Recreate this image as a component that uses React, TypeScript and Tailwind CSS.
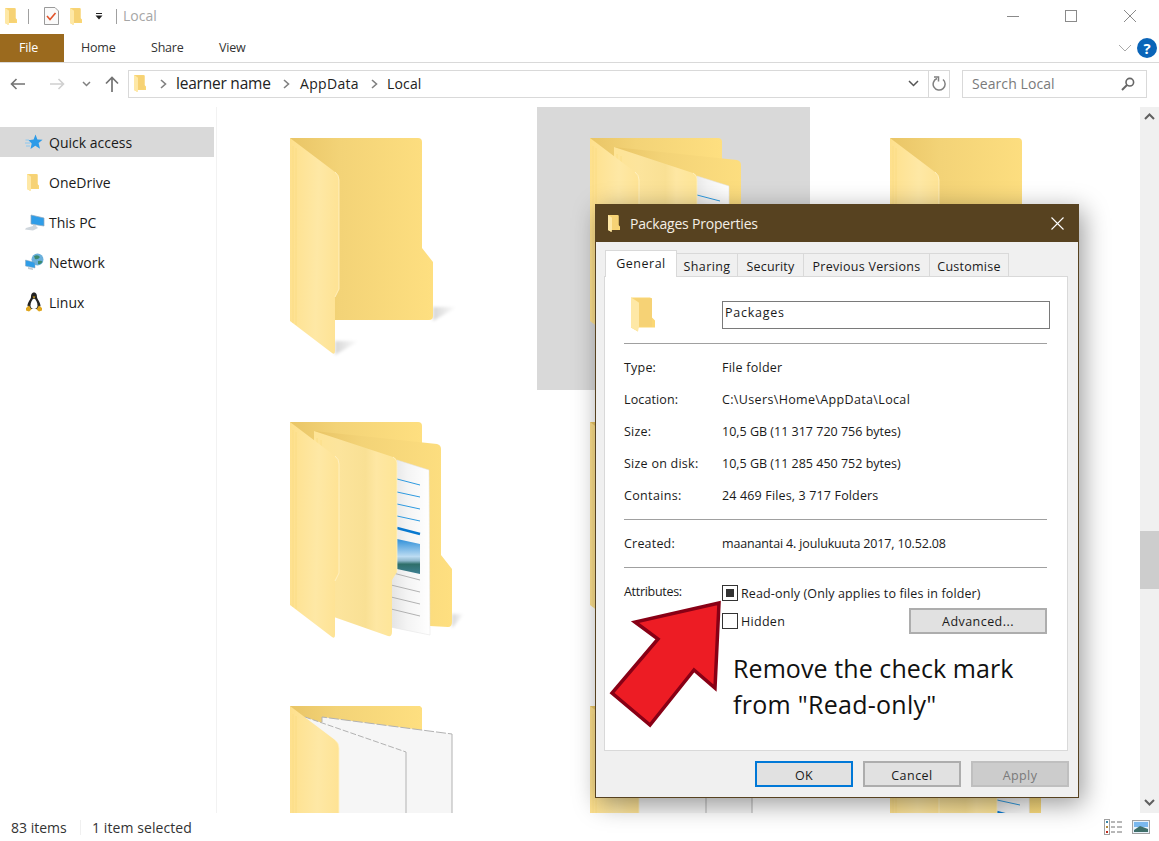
import React from "react";

const sans = "font-['Open_Sans','Noto_Sans',sans-serif]";

function Defs() {
  return (
    <svg className="absolute w-0 h-0" aria-hidden="true">
      <defs>
        <linearGradient id="back" x1="0" y1="0" x2="1" y2="0">
          <stop offset="0" stopColor="#e9c566" />
          <stop offset="0.35" stopColor="#f3d377" />
          <stop offset="1" stopColor="#fedf80" />
        </linearGradient>
        <linearGradient id="flap" x1="0" y1="0" x2="1" y2="0.1">
          <stop offset="0" stopColor="#fee08c" />
          <stop offset="0.6" stopColor="#fee8a5" />
          <stop offset="1" stopColor="#fee395" />
        </linearGradient>
        <linearGradient id="flap2" x1="0" y1="0" x2="1" y2="0">
          <stop offset="0" stopColor="#fee496" />
          <stop offset="0.3" stopColor="#fce49c" />
          <stop offset="0.62" stopColor="#f9e094" />
          <stop offset="0.75" stopColor="#fee7a3" />
          <stop offset="1" stopColor="#fee596" />
        </linearGradient>
        <linearGradient id="paper" x1="0" y1="0" x2="1" y2="0">
          <stop offset="0" stopColor="#dedede" />
          <stop offset="0.5" stopColor="#f4f4f4" />
          <stop offset="1" stopColor="#ffffff" />
        </linearGradient>
        <linearGradient id="shadowR" x1="0" y1="0" x2="1" y2="0">
          <stop offset="0" stopColor="#000" stopOpacity="0.16" />
          <stop offset="1" stopColor="#000" stopOpacity="0" />
        </linearGradient>
        <linearGradient id="sky" x1="0" y1="0" x2="0" y2="1">
          <stop offset="0" stopColor="#2f8fd8" />
          <stop offset="0.5" stopColor="#bcdcf2" />
          <stop offset="0.62" stopColor="#8fb8cc" />
          <stop offset="0.72" stopColor="#2f6f6a" />
          <stop offset="1" stopColor="#3d7f92" />
        </linearGradient>
      </defs>
    </svg>
  );
}

function Flap() {
  return (
    <g>
      <path d="M0 0L45 34Q49 37 49 42V151L45 159V213Q45 217 42 215L0 183Z" fill="url(#flap)" />
      <path d="M45 34Q49 37 49 42V151L45 159" fill="none" stroke="#fff3c9" strokeWidth="0.8" />
      <path d="M3 8V185M6 10V187" stroke="#fbdc84" strokeWidth="0.8" fill="none" />
    </g>
  );
}

function Shadow({ x, y, w = 24 }: { x: number; y: number; w?: number }) {
  return <path className="blur-[1.5px]" d={`M${x} ${y}H${x + 3}L${x + w} ${y}L${x} ${y + 14}Z`} fill="url(#shadowR)" />;
}

function PlainFolder() {
  return (
    <svg width="170" height="230" viewBox="0 0 170 230" className="block overflow-visible">
      <Shadow x={143} y={169} />
      <Shadow x={45} y={203} />
      <path d="M0 0H128Q132 0 132 4V110L143 124V178Q143 182 139 182H30Z" fill="url(#back)" />
      <Flap />
    </svg>
  );
}

function DocsFolder() {
  return (
    <svg width="170" height="230" viewBox="0 0 170 230" className="block overflow-visible">
      <Shadow x={162} y={192} w={12} />
      <path d="M0 0H128Q132 0 132 4V30H0Z" fill="url(#back)" />
      <path d="M24 9L147 22Q151 23 151 27V133L162 147V200Q162 205 158 205L140 204L60 150Z" fill="url(#back)" />
      <path d="M107 38L139 48L140 213L95 204Z" fill="url(#paper)" stroke="#e2e2e2" strokeWidth="0.5" />
      <g stroke="#2e9ae0" strokeWidth="1" fill="none">
        <path d="M107 57L130 63M107 70L130 75M107 82L130 87M107 94L130 99" />
      </g>
      <path d="M107 106L130 112" stroke="#0878cf" strokeWidth="2.4" />
      <path d="M107 117L130 122V152L107 147Z" fill="url(#sky)" />
      <g stroke="#a9a9a9" strokeWidth="0.9" fill="none">
        <path d="M103 151L130 158M101 163L130 170M101 175L130 182M101 187L130 194" />
      </g>
      <path d="M24 9L103 35Q107 37 107 41V150L102 158V210Q102 215 98 214L24 188Z" fill="url(#flap2)" />
      <path d="M103 35Q107 37 107 41V150" fill="none" stroke="#fff3c9" strokeWidth="0.8" />
      <path d="M27 16V40M31 18V40" stroke="#fbdc84" strokeWidth="0.8" />
      <Flap />
    </svg>
  );
}

function BlankFolder() {
  return (
    <svg width="170" height="230" viewBox="0 0 170 230" className="block overflow-visible">
      <path d="M0 0H130L132 2V40H0Z" fill="url(#back)" />
      <path d="M32 11L162 28V230H32Z" fill="#f6f6f6" />
      <path d="M32 16V11L162 28" fill="none" stroke="#b2b2b2" strokeWidth="1" strokeDasharray="10 2" />
      <path d="M162 28V230" fill="none" stroke="#b2b2b2" strokeWidth="1" />
      <path d="M15 11L116 46V230H15Z" fill="#f6f6f6" />
      <path d="M15 11L116 46" fill="none" stroke="#b2b2b2" strokeWidth="1" strokeDasharray="6 2" />
      <path d="M116 46V230" fill="none" stroke="#b2b2b2" strokeWidth="1" />
      <Flap />
    </svg>
  );
}

function MiniFolder({ w = 12, h = 17 }: { w?: number; h?: number }) {
  return (
    <svg width={w} height={h} viewBox="0 0 24 34" className="block shrink-0">
      <path d="M0 0H19L21 1V20L24 23V30H7V34L0 30Z" fill="#fbd774" />
      <path d="M0 0L8 5V29L7 34L0 30Z" fill="#fee8a6" />
      <path d="M8 5V29H21V1H3Z" fill="#f6d275" />
    </svg>
  );
}

function Chevron({ color = "#808080" }: { color?: string }) {
  return (
    <svg width="7" height="10" viewBox="0 0 7 10" className="block shrink-0">
      <path d="M1 1L5.5 5L1 9" fill="none" stroke={color} strokeWidth="1.6" />
    </svg>
  );
}

function StarIcon() {
  return (
    <svg width="18" height="17" viewBox="0 0 18 17" className="block">
      <path d="M10.5 0.5L12.4 5.4L17.6 5.7L13.6 9L15 14.8L10.3 11.8L5.5 15L6.7 9.4L3.5 6.2L8.6 5.6Z" fill="#2d9be8" />
      <path d="M0.5 6H4M0 9H5M1 12H5" stroke="#8cc8f0" strokeWidth="1" />
    </svg>
  );
}

function PcIcon() {
  return (
    <svg width="20" height="17" viewBox="0 0 20 17" className="block">
      <path d="M6 1L19 4V12L6 10Z" fill="#2f9de8" stroke="#8fa8bc" strokeWidth="0.7" />
      <path d="M8 10.5V12L1 14L0 15.5L8 16.5L13 14L11 12V11Z" fill="#cfd6dc" />
    </svg>
  );
}

function NetIcon() {
  return (
    <svg width="20" height="18" viewBox="0 0 20 18" className="block">
      <circle cx="12.5" cy="6.5" r="6" fill="#6ab0dc" />
      <path d="M9 3Q13 1 15 4Q13 7 10 6ZM13 8Q17 7 17.5 9Q15 12 13 11Z" fill="#3d8a6f" />
      <path d="M0.5 7L10 9.5V15L0.5 13Z" fill="#2f9de8" stroke="#93a9ba" strokeWidth="0.5" />
      <path d="M3 14L8 15.5V17L3 16Z" fill="#c5ccd2" />
    </svg>
  );
}

function TuxIcon() {
  return (
    <svg width="18" height="20" viewBox="0 0 18 20" className="block">
      <path d="M9 0.5C6.5 0.5 6 3 6 5C6 7 2.5 10 2.5 14L5 17H13L15.5 14C15.5 10 12 7 12 5C12 3 11.5 0.5 9 0.5Z" fill="#222" />
      <path d="M9 6.5C7 7.5 5.5 10.5 5.5 13.5C5.5 16 7 17 9 17C11 17 12.5 16 12.5 13.5C12.5 10.5 11 7.5 9 6.5Z" fill="#fff" />
      <path d="M7.5 4.5H10.5L9 6.5Z" fill="#e0a91f" />
      <path d="M1 16L4 13.5L6.5 17.5L4 19.5L1 18.5ZM17 16L14 13.5L11.5 17.5L14 19.5L17 18.5Z" fill="#dfa61e" />
    </svg>
  );
}

function NavItem({ icon, label, active }: { icon: React.ReactNode; label: string; active?: boolean }) {
  return (
    <div className={`h-[30px] w-[214px] flex items-center ${active ? "bg-[#d9d9d9]" : ""}`}>
      <div className="w-[49px] pl-[25px] flex items-center shrink-0">{icon}</div>
      <span className="text-[14px] text-[#1a1a1a]">{label}</span>
    </div>
  );
}

function Row({ label, value, labelT, valueT }: { label: string; value: string; labelT: string; valueT: string }) {
  return (
    <div className="flex h-[32px] pt-[2px] items-center text-[12.5px] text-[#1a1a1a]">
      <span className={`w-[98px] ${labelT}`}>{label}</span>
      <span className={valueT}>{value}</span>
    </div>
  );
}

function Sep({ className = "" }: { className?: string }) {
  return <div className={`h-px bg-[#a0a0a0] w-[423px] ${className}`} />;
}

function Tab({ label, w }: { label: string; w: string }) {
  return (
    <div className={`${w} h-[23px] pt-[4px] bg-[#f0f0f0] border border-[#d9d9d9] border-b-0 -ml-px flex items-center justify-center text-[12.5px] text-[#1a1a1a]`}>
      {label}
    </div>
  );
}

function Btn({ label, cls }: { label: string; cls: string }) {
  return (
    <div className={`w-[98px] h-[26px] pt-[4px] flex items-center justify-center text-[12.5px] border-2 ${cls}`}>{label}</div>
  );
}

function Dialog() {
  return (
    <div className="absolute left-[595px] top-[204px] w-[484px] h-[594px] bg-[#f0f0f0] border border-[#574220] border-t-0 shadow-[4px_6px_24px_rgba(0,0,0,0.4)] flex flex-col">
      <div className="h-[38px] -mx-px bg-[#574220] flex items-center pl-[13px] pr-[15px] shrink-0">
        <MiniFolder w={12} h={17} />
        <span className="ml-[10px] text-[14px] text-[#f4efe6] tracking-[-0.2px]">Packages Properties</span>
        <svg width="13" height="13" viewBox="0 0 13 13" className="block ml-auto">
          <path d="M0.5 0.5L12.5 12.5M12.5 0.5L0.5 12.5" stroke="#fff" strokeWidth="1.1" />
        </svg>
      </div>
      <div className="flex items-end h-[34px] pl-[9px] shrink-0">
        <div className="relative z-10 w-[72px] h-[27px] -mb-px bg-white border border-[#d9d9d9] border-b-0 flex items-center justify-center text-[12.5px] text-[#1a1a1a] tracking-[0.5px]">General</div>
        <Tab label="Sharing" w="w-[62px] tracking-[0.37px]" />
        <Tab label="Security" w="w-[67px] tracking-[0.17px]" />
        <Tab label="Previous Versions" w="w-[127px] tracking-[0.27px]" />
        <Tab label="Customise" w="w-[80px] tracking-[0.24px]" />
      </div>
      <div className="relative ml-[8px] w-[464px] h-[475px] bg-white border border-[#d9d9d9] pl-[19px] shrink-0">
        <div className="flex h-[66px] pt-[24px]">
          <div className="w-[98px] pl-[7px] -mt-[4px]">
            <MiniFolder w={24} h={35} />
          </div>
          <div className="w-[328px] h-[28px] border border-[#7a7a7a] pl-[2px] text-[12.5px] text-[#1a1a1a] tracking-[0.75px] leading-[22px]">Packages</div>
        </div>
        <Sep />
        <div className="pt-[7px]">
          <Row label="Type:" value="File folder" labelT="tracking-[0.2px]" valueT="tracking-[0.25px]" />
          <Row label="Location:" value="C:\Users\Home\AppData\Local" labelT="tracking-[0.13px]" valueT="tracking-[0.35px]" />
          <Row label="Size:" value="10,5 GB (11 317 720 756 bytes)" labelT="tracking-[0.2px]" valueT="tracking-[0px]" />
          <Row label="Size on disk:" value="10,5 GB (11 285 450 752 bytes)" labelT="tracking-[0.25px]" valueT="tracking-[0px]" />
          <Row label="Contains:" value="24 469 Files, 3 717 Folders" labelT="tracking-[0.35px]" valueT="tracking-[0.15px]" />
        </div>
        <Sep className="mt-[8px]" />
        <div className="pt-[7px]">
          <Row label="Created:" value="maanantai 4. joulukuuta 2017, 10.52.08" labelT="tracking-[0.2px]" valueT="tracking-[-0.15px]" />
        </div>
        <Sep className="mt-[8px]" />
        <div className="flex mt-[10px] text-[12.5px] text-[#1a1a1a]">
          <span className="w-[98px] leading-[26px] pt-[1px] tracking-[-0.3px]">Attributes:</span>
          <div className="w-[325px]">
            <div className="flex items-center h-[16px] mt-[7px]">
              <div className="w-[16px] h-[16px] border border-[#333] flex items-center justify-center shrink-0">
                <div className="w-[8px] h-[8px] bg-[#333]" />
              </div>
              <span className="ml-[3px] pt-[2px] tracking-[0.13px]">Read-only (Only applies to files in folder)</span>
            </div>
            <div className="flex items-center mt-[7px] h-[26px]">
              <div className="w-[16px] h-[16px] border border-[#333] bg-white shrink-0" />
              <span className="ml-[3px] pt-[2px] tracking-[0.3px]">Hidden</span>
              <div className="ml-auto w-[138px] h-[26px] pt-[2px] bg-[#e1e1e1] border-2 border-[#adadad] flex items-center justify-center tracking-[0.44px]">Advanced...</div>
            </div>
          </div>
        </div>
        <div className="ml-[109px] mt-[16px] text-[25px] leading-[36px] text-[#111] tracking-[0.08px]">
          <div>Remove the check mark</div>
          <div className="tracking-[0.28px]">from "Read-only"</div>
        </div>
        <svg width="120" height="130" viewBox="0 0 120 130" className="absolute left-0 top-[324px] overflow-visible">
          <path d="M114 2L30 21L53 38L7 92L45 124L89 69L110 87Z" fill="#ed1c24" stroke="#880015" strokeWidth="3.5" />
        </svg>
      </div>
      <div className="flex gap-[10px] pl-[159px] pt-[10px]">
        <Btn label="OK" cls="bg-[#e1e1e1] border-[#0078d7] text-[#1a1a1a] tracking-[0.4px]" />
        <Btn label="Cancel" cls="bg-[#e1e1e1] border-[#adadad] text-[#1a1a1a] tracking-[0.47px]" />
        <Btn label="Apply" cls="bg-[#cccccc] border-[#bfbfbf] text-[#7a7a7a] tracking-[0.4px]" />
      </div>
    </div>
  );
}

export default function App() {
  return (
    <div className={`relative w-[1159px] h-[841px] overflow-hidden bg-white ${sans}`}>
      <Defs />
      {/* title bar */}
      <div className="h-[34px] pb-[2px] flex items-center relative">
        <div className="ml-[5px]"><MiniFolder /></div>
        <div className="ml-[11px] w-px h-[15px] bg-[#a0a0a0]" />
        <svg width="15" height="18" viewBox="0 0 15 18" className="block ml-[15px]">
          <path d="M0.5 0.5H11L14.5 4V17.5H0.5Z" fill="#fafafa" stroke="#9a9a9a" />
          <path d="M3 9L6 12.5L11.5 6" fill="none" stroke="#e2542b" strokeWidth="1.6" />
        </svg>
        <div className="ml-[11px]"><MiniFolder /></div>
        <svg width="8" height="7" viewBox="0 0 8 7" className="block ml-[13px]">
          <path d="M1 0.5H7" stroke="#222" />
          <path d="M0.5 2.5H7.5L4 6.5Z" fill="#222" />
        </svg>
        <div className="ml-[13px] w-px h-[15px] bg-[#a0a0a0]" />
        <span className="ml-[6px] pb-[2px] text-[14px] text-[#a6a6a6]">Local</span>
        <div className="ml-auto flex items-center pr-[23px] gap-[46px]">
          <div className="w-[12px] h-px bg-[#8a8a8a]" />
          <div className="w-[12px] h-[12px] border border-[#8a8a8a]" />
          <svg width="12" height="12" viewBox="0 0 12 12" className="block ml-[1px]">
            <path d="M0 0L12 12M12 0L0 12" stroke="#8a8a8a" strokeWidth="1" />
          </svg>
        </div>
      </div>
      {/* ribbon */}
      <div className="h-[29px] border-b border-[#d9d9d9] flex items-stretch text-[12.5px] text-[#333] tracking-[-0.2px]">
        <div className="w-[64px] pr-[7px] pt-[1px] bg-[#9b6a1e] text-white flex items-center justify-center">File</div>
        <div className="ml-[17px] pt-[1px] flex items-center w-[53px]">Home</div>
        <div className="ml-[17px] pt-[1px] flex items-center w-[48px]">Share</div>
        <div className="ml-[20px] pt-[1px] flex items-center">View</div>
        <div className="ml-auto flex items-center pr-[2px]">
          <svg width="14" height="8" viewBox="0 0 14 8" className="block mr-[5px]">
            <path d="M1 1L7 7L13 1" fill="none" stroke="#a9a9a9" />
          </svg>
          <div className="w-[20px] h-[20px] rounded-full bg-[#0a64b8] text-white font-bold text-[15px] flex items-center justify-center">?</div>
        </div>
      </div>
      {/* address row */}
      <div className="h-[44px] flex items-center pb-[3px]">
        <svg width="16" height="12" viewBox="0 0 16 12" className="block ml-[10px]">
          <path d="M15 6H1.5M6.5 1L1.5 6L6.5 11" fill="none" stroke="#737373" strokeWidth="1.6" />
        </svg>
        <svg width="16" height="12" viewBox="0 0 16 12" className="block ml-[23px]">
          <path d="M1 6H14.5M9.5 1L14.5 6L9.5 11" fill="none" stroke="#d0d0d0" strokeWidth="1.6" />
        </svg>
        <svg width="9" height="6" viewBox="0 0 9 6" className="block ml-[17px]">
          <path d="M1 1L4.5 4.5L8 1" fill="none" stroke="#808080" strokeWidth="1.5" />
        </svg>
        <svg width="14" height="16" viewBox="0 0 14 16" className="block ml-[14px]">
          <path d="M7 16V2M1 7.5L7 1.5L13 7.5" fill="none" stroke="#737373" strokeWidth="1.7" />
        </svg>
        <div className="ml-[9px] w-[822px] h-[28px] border border-[#d9d9d9] flex items-center">
          <div className="ml-[5px]"><MiniFolder /></div>
          <div className="ml-[14px]"><Chevron /></div>
          <span className="ml-[9px] text-[15.5px] text-[#222] tracking-[-0.22px] w-[107px]">learner name</span>
          <Chevron />
          <span className="ml-[10px] text-[14px] text-[#222] tracking-[0.32px] w-[71px]">AppData</span>
          <Chevron />
          <span className="ml-[9px] text-[14px] text-[#222] tracking-[0.15px]">Local</span>
          <svg width="11" height="7" viewBox="0 0 11 7" className="block ml-auto mr-[9px]">
            <path d="M1 1L5.5 5.5L10 1" fill="none" stroke="#555" strokeWidth="1.5" />
          </svg>
          <div className="h-full w-[21px] border-l border-[#d9d9d9] flex items-center justify-center">
            <svg width="15" height="16" viewBox="0 0 15 16" className="block">
              <path d="M5 2.5A6 6 0 1 0 11 3.5" fill="none" stroke="#808080" strokeWidth="1.5" />
              <path d="M2 1H6.5V5.5" fill="none" stroke="#808080" strokeWidth="1.5" />
            </svg>
          </div>
        </div>
        <div className="ml-[12px] w-[185px] h-[28px] border border-[#d9d9d9] flex items-center pl-[9px] pr-[11px] text-[14px] text-[#7a7a7a] tracking-[0.08px]">
          <span>Search Local</span>
          <svg width="14" height="14" viewBox="0 0 14 14" className="block ml-auto">
            <circle cx="8.8" cy="5.2" r="3.8" fill="none" stroke="#666" strokeWidth="1.6" />
            <path d="M6 8L1 13" stroke="#666" strokeWidth="2" />
          </svg>
        </div>
      </div>
      {/* main */}
      <div className="h-[706px] flex">
        <div className="w-[217px] shrink-0 pt-[20px] border-r border-[#f2f2f2] flex flex-col gap-[10px]">
          <NavItem active icon={<StarIcon />} label="Quick access" />
          <NavItem icon={<div className="pl-[2px]"><MiniFolder /></div>} label="OneDrive" />
          <NavItem icon={<PcIcon />} label="This PC" />
          <NavItem icon={<NetIcon />} label="Network" />
          <NavItem icon={<TuxIcon />} label="Linux" />
        </div>
        <div className="flex-1 overflow-hidden pl-[20px]">
          <div className="grid grid-cols-[273px_273px_273px] auto-rows-[283px] gap-x-[27px] gap-y-[1px]">
            <div className="pl-[53px] pt-[31px]"><PlainFolder /></div>
            <div className="pl-[53px] pt-[31px] bg-[#d9d9d9]"><DocsFolder /></div>
            <div className="pl-[53px] pt-[31px]"><PlainFolder /></div>
            <div className="pl-[53px] pt-[31px]"><DocsFolder /></div>
            <div className="pl-[53px] pt-[31px]"><PlainFolder /></div>
            <div className="pl-[53px] pt-[31px]"><PlainFolder /></div>
            <div className="pl-[53px] pt-[31px]"><BlankFolder /></div>
            <div className="pl-[53px] pt-[31px]"><BlankFolder /></div>
            <div className="pl-[53px] pt-[31px]"><DocsFolder /></div>
          </div>
        </div>
        <div className="w-[19px] shrink-0 bg-[#f0f0f0] flex flex-col items-center relative">
          <svg width="11" height="7" viewBox="0 0 11 7" className="block mt-[6px]">
            <path d="M1 6L5.5 1.5L10 6" fill="none" stroke="#606060" strokeWidth="2" />
          </svg>
          <div className="w-full h-[58px] bg-[#cdcdcd] mt-[411px]" />
          <svg width="11" height="7" viewBox="0 0 11 7" className="block mt-auto mb-[7px]">
            <path d="M1 1L5.5 5.5L10 1" fill="none" stroke="#606060" strokeWidth="2" />
          </svg>
        </div>
      </div>
      {/* status bar */}
      <div className="h-[28px] flex items-center text-[14px] text-[#333]">
        <span className="ml-[11px] w-[69px]">83 items</span>
        <div className="w-px h-[15px] bg-[#f0f0f0]" />
        <span className="ml-[11px] tracking-[0.08px]">1 item selected</span>
        <div className="ml-auto flex items-center gap-[10px] pr-[9px]">
          <svg width="18" height="16" viewBox="0 0 18 16" className="block">
            <rect x="0.5" y="0.5" width="5" height="15" fill="#fff" stroke="#a0a0a0" />
            <rect x="2" y="2" width="2" height="2" fill="#3a87a8" />
            <rect x="2" y="7" width="2" height="2" fill="#b08a3c" />
            <rect x="2" y="12" width="2" height="2" fill="#c02a1c" />
            <path d="M7 3H11M13 3H18M7 8H11M13 8H18M7 13H11M13 13H18" stroke="#707070" />
          </svg>
          <svg width="18" height="14" viewBox="0 0 18 14" className="block">
            <rect x="0.5" y="0.5" width="17" height="13" fill="#e8f2fb" stroke="#a0a0a0" />
            <rect x="2" y="2" width="14" height="5" fill="#7ab8ee" />
            <path d="M2 10L8 6L16 9V12H2Z" fill="#3f6f6a" />
          </svg>
        </div>
      </div>
      <Dialog />
    </div>
  );
}
